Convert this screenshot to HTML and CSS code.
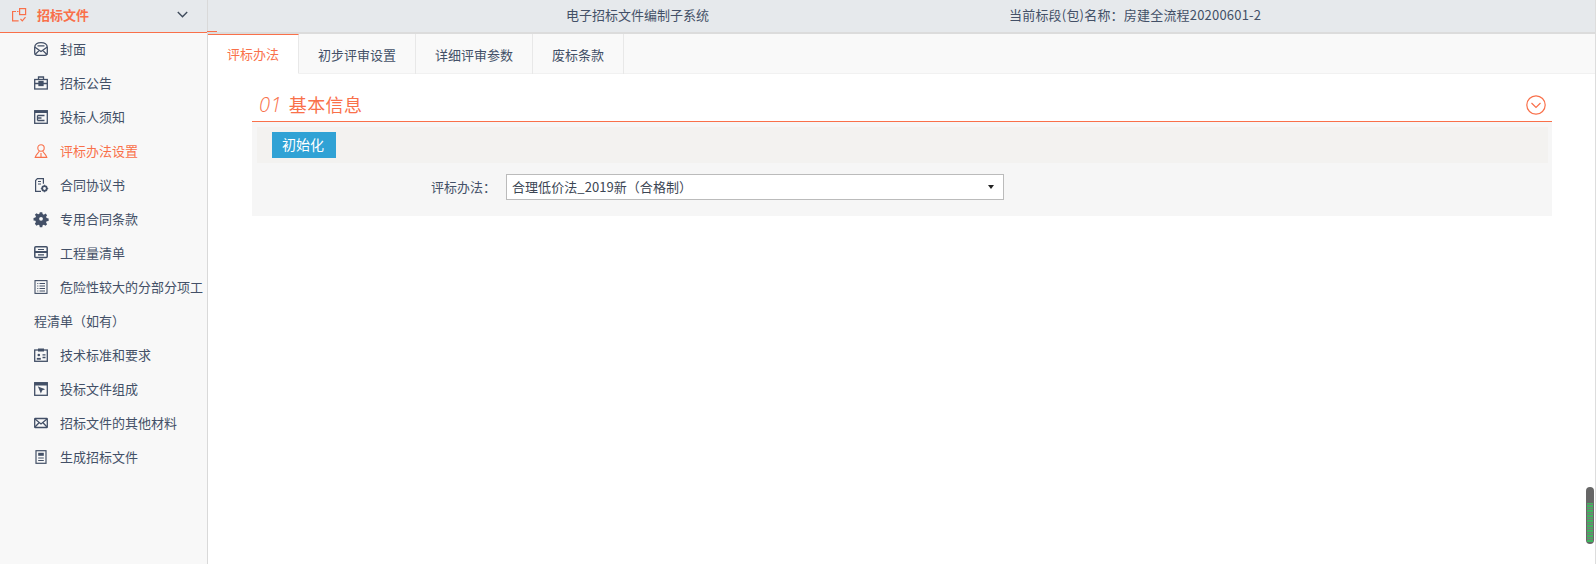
FILE: index.html
```html
<!DOCTYPE html>
<html lang="zh-CN">
<head>
<meta charset="utf-8">
<title>电子招标文件编制子系统</title>
<link rel="stylesheet" href="styles.css">
</head>
<body>
<div class="app">
  <aside class="sidebar">
    <div class="side-head">
      <svg class="head-icon" viewBox="0 0 15 14" fill="none" stroke="#f9704a" stroke-width="1.2"><path d="M4 3.500H.6v9.300h6"/><rect x="7.600" y=".6" width="6" height="6"/><path d="M8.500 11l1.800 1.800 3.200-3.600M5 3.500h1.500"/></svg>
      <span class="side-title">招标文件</span>
      <svg class="chev" viewBox="0 0 11 7" fill="none" stroke="#3f4b5c" stroke-width="1.4"><path d="M.8 1l4.700 4.700L10.200 1"/></svg>
    </div>
    <ul class="menu">
      <li class="item"><svg class="ic" viewBox="0 0 14 14" fill="none" stroke="#435067" stroke-width="1.300"><path d="M.7 5.500C.7 2 3.500.7 7 .7s6.300 1.300 6.300 4.800v5.300c0 1.500-1 2.500-2.500 2.500H3.200c-1.500 0-2.500-1-2.500-2.500z"/><path d="M.7 5l6.300 4.500L13.300 5M3.500 3.800h7M.8 12.800l4.500-4.400M13.200 12.800L8.700 8.400"/></svg>封面</li>
      <li class="item"><svg class="ic" viewBox="0 0 14 14" fill="none" stroke="#435067" stroke-width="1.300"><rect x=".7" y="3.500" width="12.600" height="9.500"/><path d="M4.500 3.500V1h5v2.500M.7 7.500h12.600"/><rect x="5" y="5.500" width="4" height="4" fill="#435067"/></svg>招标公告</li>
      <li class="item"><svg class="ic" viewBox="0 0 14 14" fill="none" stroke="#435067" stroke-width="1.300"><rect x=".7" y=".7" width="12.600" height="12.600"/><path d="M.7 2h12.600" stroke-width="2"/><path d="M3.500 5.500h7M3.500 5.500v5M3.500 8h4M3.500 10.500h7"/></svg>投标人须知</li>
      <li class="item item-on"><svg class="ic" viewBox="0 0 14 14" fill="none" stroke="#f9704a" stroke-width="1.100"><circle cx="7" cy="4" r="3.200"/><path d="M5.200 7C4.800 9 2 10 1.200 13.400h11.600C12 10 9.200 9 8.800 7M7 9v4.400"/></svg>评标办法设置</li>
      <li class="item"><svg class="ic" viewBox="0 0 14 14" fill="none" stroke="#435067" stroke-width="1.200"><path d="M7 13.300H1.600V2.500L3.400.7h6v5M4 3.500h3M4 6h3"/><circle cx="10.500" cy="10.500" r="2.300" stroke-width="1.800"/><path d="M10.500 6.800v1M10.500 13.200v1M6.800 10.500h1M13.200 10.500h1" stroke-width="1.200"/></svg>合同协议书</li>
      <li class="item"><svg class="ic" viewBox="0 0 14 14"><path fill="#435067" fill-rule="evenodd" d="M5.700 0h2.600l.4 2 1.300.6 1.800-1.100 1.600 1.700-1.100 1.700.6 1.300 2.100.5v2.500l-2.100.4-.6 1.300 1.100 1.800-1.700 1.700-1.700-1.200-1.300.6-.4 2.100H5.700l-.4-2.100-1.300-.5-1.800 1.100L.5 12.200l1.100-1.800-.5-1.300L-.9 8.700V6.200l2-.5.600-1.300L.5 2.700l1.700-1.700L4 2.200l1.300-.6zM7 5a2 2 0 1 0 0 4a2 2 0 0 0 0-4z" transform="scale(.95) translate(.4 .2)"/></svg>专用合同条款</li>
      <li class="item"><svg class="ic" viewBox="0 0 14 14" fill="none" stroke="#435067" stroke-width="1.500"><rect x=".8" y=".8" width="12.400" height="10.700" rx="1"/><path d="M.8 6h12.400" stroke-width="2"/><path d="M4 3.500h6M4 8.800h6M5 13.300h4" stroke-width="1.200"/></svg>工程量清单</li>
      <li class="item"><svg class="ic" viewBox="0 0 14 14" fill="none" stroke="#435067" stroke-width="1.100"><rect x="1" y=".6" width="12" height="12.800"/><path d="M3.300 3.500h1M5.500 3.500h5.500M3.300 6h1M5.500 6h5.500M3.300 8.500h1M5.500 8.500h5.500M3.300 11h1M5.500 11h5.500"/></svg>危险性较大的分部分项工程清单（如有）</li>
      <li class="item"><svg class="ic" viewBox="0 0 14 14" fill="none" stroke="#435067" stroke-width="1.300"><rect x=".7" y="2" width="12.600" height="11.300"/><rect x="4" y=".5" width="6" height="3" fill="#435067" stroke="none"/><circle cx="4.800" cy="7" r="1.300" fill="#435067" stroke="none"/><path d="M2.800 10.800h4" stroke-width="1.800"/><path d="M8.500 6.800h3M8.500 9.500h3"/></svg>技术标准和要求</li>
      <li class="item"><svg class="ic" viewBox="0 0 14 14" fill="none" stroke="#435067" stroke-width="1.300"><rect x=".7" y=".7" width="12.600" height="12.600"/><path d="M.7 2.200h12.600" stroke-width="2.600"/><path d="M5 5.500l4.500 1.700-1.800.8-.8 1.800z" fill="#435067"/></svg>投标文件组成</li>
      <li class="item"><svg class="ic" viewBox="0 0 14 14" fill="none" stroke="#435067" stroke-width="1.300"><rect x=".7" y="2.500" width="12.600" height="9" rx=".6"/><path d="M1 3l6 5 6-5M1 11l4-4.200M13 11L9 6.800"/></svg>招标文件的其他材料</li>
      <li class="item"><svg class="ic" viewBox="0 0 14 14" fill="none" stroke="#435067" stroke-width="1.200"><rect x="2" y=".7" width="10" height="12.600"/><rect x="4.200" y="2.800" width="5.600" height="3" fill="#435067" stroke="none"/><path d="M4.200 8h5.600M4.200 10.500h5.600"/></svg>生成招标文件</li>
    </ul>
  </aside>
  <main class="main">
    <header class="topbar">
      <span class="sys-name">电子招标文件编制子系统</span>
      <span class="section-name">当前标段(包)名称：房建全流程20200601-2</span>
    </header>
    <nav class="tabs">
      <a class="tab tab-on">评标办法</a>
      <a class="tab">初步评审设置</a>
      <a class="tab">详细评审参数</a>
      <a class="tab">废标条款</a>
    </nav>
    <section class="content">
      <div class="sec-head">
        <h2 class="sec-title"><em class="sec-no">01</em>基本信息</h2>
        <svg class="sec-toggle" viewBox="0 0 20 20" fill="none" stroke="#f9704a" stroke-width="1.200"><circle cx="10" cy="10" r="9.200"/><path d="M5.500 8l4.500 4.500L14.500 8"/></svg>
      </div>
      <div class="panel">
        <div class="toolbar"><button class="btn" type="button">初始化</button></div>
        <div class="field">
          <label class="field-label">评标办法：</label>
          <div class="select"><span class="select-text">合理低价法_2019新（合格制）</span><i class="caret"></i></div>
        </div>
      </div>
    </section>
  </main>
</div>
<div class="scrollwidget"><div class="scrollbars"></div></div>
</body>
</html>
```
FILE: styles.css
```css
* { box-sizing: border-box; }
html, body { margin: 0; height: 100%; overflow: hidden; background: #fff; }
body { font-family: "Noto Sans CJK SC", "Noto Sans", sans-serif; font-size: 13px; color: #435067; }
.app { display: flex; width: 1596px; height: 564px; border-right: 1px solid #ddd; }

.sidebar { flex: 0 0 208px; background: #f8f8f8; border-right: 1px solid #d9d9d9; position: relative; }
.side-head { height: 33px; background: #e6e9ec; border-bottom: 1px solid #f9704a; display: flex; align-items: center; padding: 0 19px 3px 12px; }
.side-head::after { content: ""; position: absolute; left: 207px; top: 31px; width: 10px; height: 1px; background: #f9704a; z-index: 2; }
.head-icon { width: 15px; height: 14px; }
.side-title { margin-left: 10px; color: #f9704a; font-weight: 700; flex: 1; }
.chev { width: 11px; height: 7px; }
.menu { list-style: none; margin: -1px 0 0; padding: 0 0 0 34px; }
.item { line-height: 34px; color: #435067; }
.ic { width: 14px; height: 14px; margin-right: 12px; vertical-align: -2px; overflow: visible; }
.item-on { color: #f9704a; }

.main { flex: 1; min-width: 0; display: flex; flex-direction: column; }
.topbar { height: 34px; flex: none; background: #e6e9ec; border-bottom: 2px solid #dcdcdc; display: flex; align-items: center; padding: 0 0 4px 358px; }
.sys-name { width: 443px; }
.section-name { letter-spacing: .2px; }
.tabs { height: 40px; flex: none; background: #f9f9f9; display: flex; border-bottom: 1px solid #f1f1f1; }
.tab { display: flex; align-items: center; justify-content: center; height: 40px; border-right: 1px solid #e8e8e8; padding: 0 19px; color: #435067; }
.tab-on { background: #fff; color: #f9704a; border-top: 1px solid #f9704a; border-bottom: 1px solid #fff; padding-bottom: 1px; }

.content { padding: 16px 43px 0 44px; }
.sec-head { height: 32px; display: flex; align-items: center; justify-content: space-between; border-bottom: 1px solid #f9704a; padding: 0 6px 1px 7px; }
.sec-title { margin: 0 0 2px; font-size: 18px; font-weight: 400; color: #f9704a; line-height: 30px; letter-spacing: .4px; }
.sec-no { font-family: "Open Sans", sans-serif; font-weight: 300; font-size: 20px; margin-right: 7px; font-style: italic; }
.sec-toggle { width: 20px; height: 20px; }
.panel { background: #f6f6f6; height: 94px; padding: 5px 4px 0 5px; }
.toolbar { background: #f3f2f0; height: 36px; padding: 5px 15px; }
.btn { display: block; width: 64px; height: 26px; padding: 0 2px 2px 0; border: 0; background: #30a2d5; color: #fff; font: inherit; font-size: 14px; }
.field { display: flex; align-items: center; margin-top: 11px; padding-left: 174px; }
.field-label { width: 75px; margin-bottom: 1px; }
.select { width: 498px; height: 26px; background: #fff; border: 1px solid #bbb; display: flex; align-items: center; justify-content: space-between; padding: 0 9px 0 5px; color: #3c4654; }
.select-text { margin-bottom: 2px; letter-spacing: .06px; }
.caret { width: 0; height: 0; border: 3px solid transparent; border-top: 4px solid #222; border-bottom: 0; }

.scrollwidget { position: absolute; left: 1586px; top: 487px; width: 8px; height: 57px; background: #666; border-radius: 4px; padding: 16px 1px 2px; }
.scrollbars { height: 100%; background: repeating-linear-gradient(to bottom, #3fb55e 0 1px, #777 1px 2px, #3fb55e 2px 4px, #777 4px 5px); }
```
